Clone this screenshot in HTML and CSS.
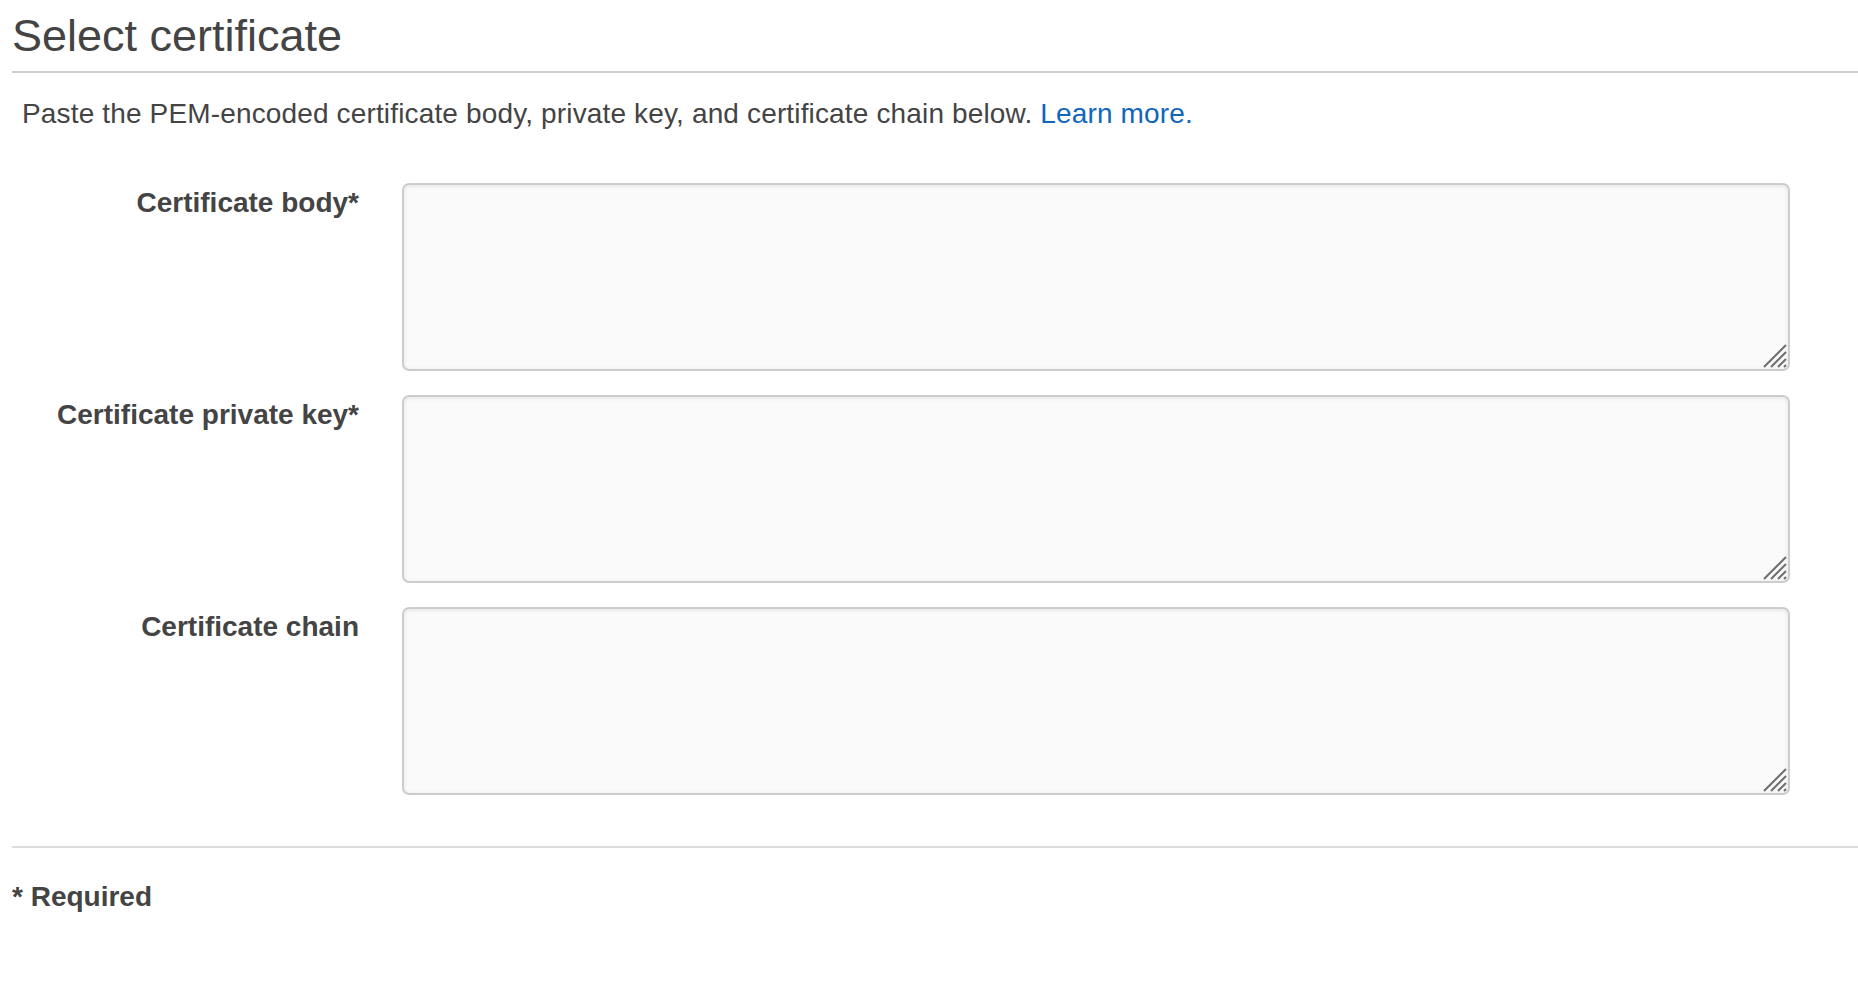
FILE: index.html
```html
<!DOCTYPE html>
<html lang="en">
<head>
<meta charset="utf-8">
<title>Select certificate</title>
<link rel="stylesheet" href="styles.css">
</head>
<body>
<div class="page">
  <h2 class="title">Select certificate</h2>
  <p class="intro">Paste the PEM-encoded certificate body, private key, and certificate chain below. <a href="#" class="link">Learn more.</a></p>
  <div class="form">
    <label class="label" for="body">Certificate body*</label>
    <div class="field">
      <textarea id="body" class="input"></textarea>
      <svg class="grip" width="24" height="24" viewBox="0 0 24 24"><path d="M1 23L23 1M8 23L23 8M15 23L23 15M21 23L23 21" stroke="#6f6f6f" stroke-width="2" fill="none"/></svg>
    </div>
    <label class="label" for="key">Certificate private key*</label>
    <div class="field">
      <textarea id="key" class="input"></textarea>
      <svg class="grip" width="24" height="24" viewBox="0 0 24 24"><path d="M1 23L23 1M8 23L23 8M15 23L23 15M21 23L23 21" stroke="#6f6f6f" stroke-width="2" fill="none"/></svg>
    </div>
    <label class="label" for="chain">Certificate chain</label>
    <div class="field">
      <textarea id="chain" class="input"></textarea>
      <svg class="grip" width="24" height="24" viewBox="0 0 24 24"><path d="M1 23L23 1M8 23L23 8M15 23L23 15M21 23L23 21" stroke="#6f6f6f" stroke-width="2" fill="none"/></svg>
    </div>
  </div>
  <div class="footer">* Required</div>
</div>
</body>
</html>
```

FILE: styles.css
```css
html, body {
  margin: 0;
  padding: 0;
  background: #ffffff;
}

body {
  font-family: "Liberation Sans", Arial, Helvetica, sans-serif;
  color: #444444;
}

.page {
  padding-left: 12px;
}

.title {
  margin: 0;
  padding-top: 11px;
  padding-bottom: 10px;
  font-size: 45px;
  line-height: 50px;
  font-weight: normal;
  color: #444444;
  border-bottom: 2px solid #cfcfcf;
}

.intro {
  margin: 24px 0 0 0;
  padding-left: 10px;
  font-size: 28px;
  line-height: 34px;
  letter-spacing: 0.15px;
  color: #444444;
}

.link {
  color: #1166bb;
  text-decoration: none;
}

.form {
  display: grid;
  grid-template-columns: 347px 1388px;
  column-gap: 43px;
  row-gap: 24px;
  margin-top: 52px;
  padding-bottom: 51px;
  border-bottom: 2px solid #dddddd;
}

.label {
  text-align: right;
  font-weight: bold;
  font-size: 28px;
  line-height: 34px;
  padding-top: 3px;
  color: #444444;
}

.field {
  position: relative;
  height: 188px;
}

.input {
  display: block;
  box-sizing: border-box;
  width: 100%;
  height: 100%;
  margin: 0;
  border: 2px solid #cdcdcd;
  border-radius: 7px;
  background: #fafafa;
  box-shadow: inset 0 1px 4px rgba(0, 0, 0, 0.1);
  resize: none;
  outline: none;
  font-family: "Liberation Mono", monospace;
}

.grip {
  position: absolute;
  right: 3px;
  bottom: 3px;
}

.footer {
  margin-top: 32px;
  font-size: 28px;
  line-height: 34px;
  font-weight: bold;
  color: #444444;
}
```
